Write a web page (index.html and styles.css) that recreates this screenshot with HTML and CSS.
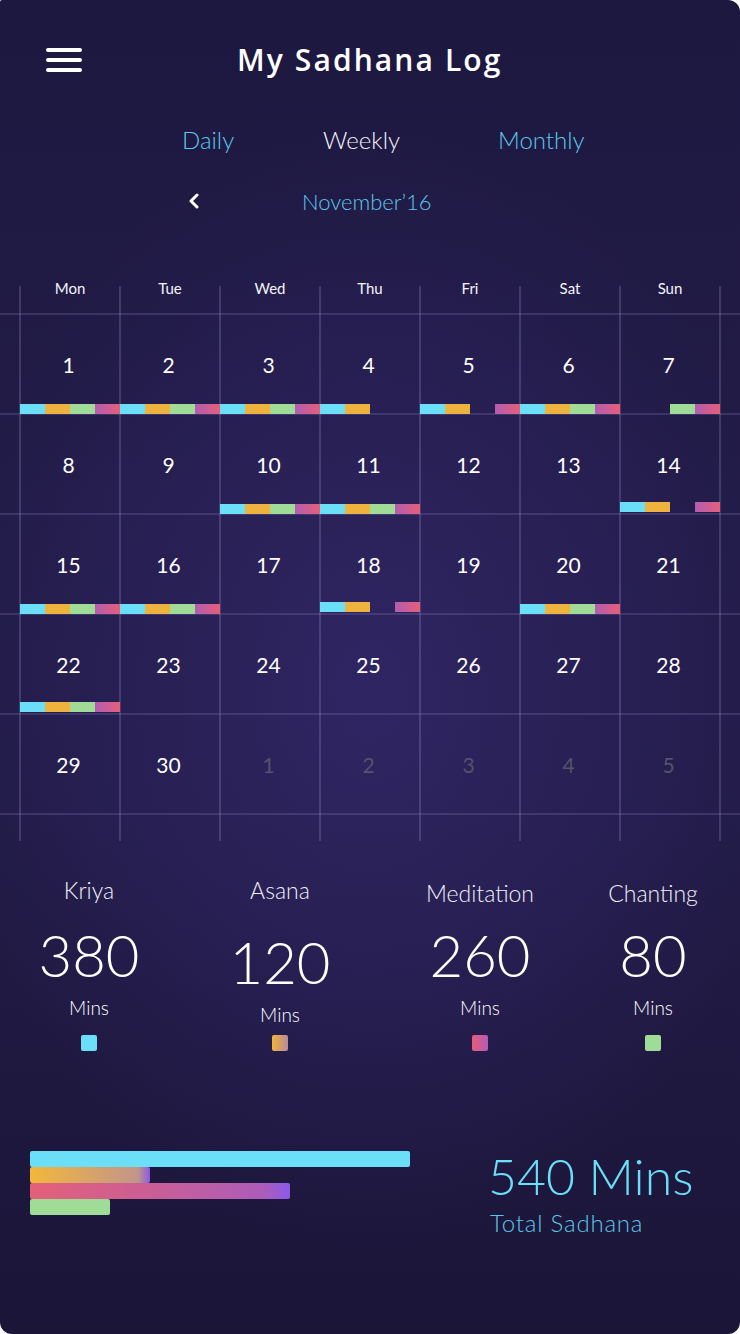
FILE: index.html
```html
<!DOCTYPE html>
<html lang="en">
<head>
<meta charset="utf-8">
<title>My Sadhana Log</title>
<link rel="stylesheet" href="styles.css">
</head>
<body>
<div class="screen">
  <header class="topbar">
    <button class="menu" aria-label="Menu">
      <span></span><span></span><span></span>
    </button>
    <h1 class="title">My Sadhana Log</h1>
  </header>

  <nav class="tabs">
    <span class="tab tab-daily">Daily</span>
    <span class="tab tab-weekly">Weekly</span>
    <span class="tab tab-monthly">Monthly</span>
  </nav>

  <div class="month-nav">
    <svg class="chev" width="12" height="16" viewBox="0 0 12 16"><path d="M9 2 L3 8 L9 14" fill="none" stroke="#fff" stroke-width="3" stroke-linecap="round" stroke-linejoin="round"/></svg>
    <span class="month">November’16</span>
  </div>

  <section class="calendar">
    <div class="row head">
      <div class="grid">
        <div class="dow">Mon</div><div class="dow">Tue</div><div class="dow">Wed</div><div class="dow">Thu</div><div class="dow">Fri</div><div class="dow">Sat</div><div class="dow">Sun</div>
      </div>
    </div>

    <div class="row week">
      <div class="grid">
        <div class="day"><span class="num">1</span><div class="bar"><i class="k"></i><i class="a"></i><i class="c"></i><i class="m"></i></div></div>
        <div class="day"><span class="num">2</span><div class="bar"><i class="k"></i><i class="a"></i><i class="c"></i><i class="m"></i></div></div>
        <div class="day"><span class="num">3</span><div class="bar"><i class="k"></i><i class="a"></i><i class="c"></i><i class="m"></i></div></div>
        <div class="day"><span class="num">4</span><div class="bar"><i class="k"></i><i class="a"></i><i></i><i></i></div></div>
        <div class="day"><span class="num">5</span><div class="bar"><i class="k"></i><i class="a"></i><i></i><i class="m"></i></div></div>
        <div class="day"><span class="num">6</span><div class="bar"><i class="k"></i><i class="a"></i><i class="c"></i><i class="m"></i></div></div>
        <div class="day"><span class="num">7</span><div class="bar"><i></i><i></i><i class="c"></i><i class="m"></i></div></div>
      </div>
    </div>

    <div class="row week">
      <div class="grid">
        <div class="day"><span class="num">8</span></div>
        <div class="day"><span class="num">9</span></div>
        <div class="day"><span class="num">10</span><div class="bar"><i class="k"></i><i class="a"></i><i class="c"></i><i class="m"></i></div></div>
        <div class="day"><span class="num">11</span><div class="bar"><i class="k"></i><i class="a"></i><i class="c"></i><i class="m"></i></div></div>
        <div class="day"><span class="num">12</span></div>
        <div class="day"><span class="num">13</span></div>
        <div class="day"><span class="num">14</span><div class="bar up"><i class="k"></i><i class="a"></i><i></i><i class="m"></i></div></div>
      </div>
    </div>

    <div class="row week">
      <div class="grid">
        <div class="day"><span class="num">15</span><div class="bar"><i class="k"></i><i class="a"></i><i class="c"></i><i class="m"></i></div></div>
        <div class="day"><span class="num">16</span><div class="bar"><i class="k"></i><i class="a"></i><i class="c"></i><i class="m"></i></div></div>
        <div class="day"><span class="num">17</span></div>
        <div class="day"><span class="num">18</span><div class="bar up"><i class="k"></i><i class="a"></i><i></i><i class="m"></i></div></div>
        <div class="day"><span class="num">19</span></div>
        <div class="day"><span class="num">20</span><div class="bar"><i class="k"></i><i class="a"></i><i class="c"></i><i class="m"></i></div></div>
        <div class="day"><span class="num">21</span></div>
      </div>
    </div>

    <div class="row week">
      <div class="grid">
        <div class="day"><span class="num">22</span><div class="bar up"><i class="k"></i><i class="a"></i><i class="c"></i><i class="m"></i></div></div>
        <div class="day"><span class="num">23</span></div>
        <div class="day"><span class="num">24</span></div>
        <div class="day"><span class="num">25</span></div>
        <div class="day"><span class="num">26</span></div>
        <div class="day"><span class="num">27</span></div>
        <div class="day"><span class="num">28</span></div>
      </div>
    </div>

    <div class="row week">
      <div class="grid">
        <div class="day"><span class="num">29</span></div>
        <div class="day"><span class="num">30</span></div>
        <div class="day other"><span class="num">1</span></div>
        <div class="day other"><span class="num">2</span></div>
        <div class="day other"><span class="num">3</span></div>
        <div class="day other"><span class="num">4</span></div>
        <div class="day other"><span class="num">5</span></div>
      </div>
    </div>

    <div class="tail"></div>
  </section>

  <section class="stats">
    <div class="stat">
      <div class="label">Kriya</div>
      <div class="value">380</div>
      <div class="unit">Mins</div>
      <span class="swatch k"></span>
    </div>
    <div class="stat low">
      <div class="label">Asana</div>
      <div class="value">120</div>
      <div class="unit">Mins</div>
      <span class="swatch a"></span>
    </div>
    <div class="stat">
      <div class="label shift">Meditation</div>
      <div class="value">260</div>
      <div class="unit">Mins</div>
      <span class="swatch m"></span>
    </div>
    <div class="stat">
      <div class="label shift">Chanting</div>
      <div class="value">80</div>
      <div class="unit">Mins</div>
      <span class="swatch c"></span>
    </div>
  </section>

  <section class="summary">
    <div class="hbars">
      <div class="hbar k" style="width:380px"></div>
      <div class="hbar a" style="width:120px"></div>
      <div class="hbar m" style="width:260px"></div>
      <div class="hbar c" style="width:80px"></div>
    </div>
    <div class="total">
      <div class="total-value">540 Mins</div>
      <div class="total-label">Total Sadhana</div>
    </div>
  </section>
</div>
</body>
</html>
```
FILE: styles.css
```css
* { box-sizing: border-box; }
html, body { margin: 0; padding: 0; background: #ffffff; }
body { font-family: "Lato", "Open Sans", sans-serif; color: #fff; }

.screen {
  width: 740px;
  height: 1334px;
  border-radius: 2px 12px 12px 12px;
  overflow: hidden;
  background:
    radial-gradient(ellipse 420px 560px at 370px 690px, rgba(52, 40, 108, 0.75), rgba(52, 40, 108, 0) 100%),
    linear-gradient(180deg, #1d1840 0%, #221c48 40%, #221c48 60%, #1b1538 100%);
  display: flex;
  flex-direction: column;
}

/* header */
.topbar {
  height: 120px;
  display: flex;
  align-items: center;
  padding: 0 0 0 46px;
}
.menu {
  width: 36px;
  height: 24px;
  padding: 0;
  border: 0;
  background: none;
  display: flex;
  flex-direction: column;
  justify-content: space-between;
  margin-top: -1px;
}
.menu span {
  display: block;
  height: 4px;
  border-radius: 2px;
  background: #fff;
}
.title {
  margin: 0 0 0 155px;
  font-family: "Open Sans", sans-serif;
  font-weight: 600;
  font-size: 30px;
  letter-spacing: 2.1px;
  line-height: 36px;
  color: #fff;
}

/* tabs */
.tabs {
  height: 44px;
  margin-top: -3px;
  display: grid;
  grid-template-columns: 323px 175px 1fr;
  align-items: center;
  font-weight: 300;
  font-size: 24px;
}
.tab-daily { color: #5bc8e8; margin-left: 182px; }
.tab-weekly { color: #f2f2f8; }
.tab-monthly { color: #5bc8e8; }

/* month nav */
.month-nav {
  height: 44px;
  margin-top: 18px;
  display: flex;
  align-items: center;
  padding-left: 188px;
}
.chev { display: block; }
.month {
  margin-left: 102px;
  font-weight: 300;
  font-size: 22px;
  color: #5bc8e8;
}

/* calendar */
.calendar {
  margin-top: 63px;
  background-image: repeating-linear-gradient(90deg, rgba(150, 140, 200, 0.28) 0, rgba(150, 140, 200, 0.28) 2px, transparent 2px, transparent 100px);
  background-size: 702px 100%;
  background-position: 19px 0;
  background-repeat: no-repeat;
}
.row { border-bottom: 2px solid rgba(150, 140, 200, 0.22); }
.grid {
  margin: 0 20px;
  display: grid;
  grid-template-columns: repeat(7, 100px);
}
.head { height: 29px; }
.dow {
  text-align: center;
  font-size: 15px;
  line-height: 16px;
  margin-top: -6px;
  color: #f4f4fa;
}
.week .grid { height: 98px; }
.day {
  display: flex;
  flex-direction: column;
  align-items: center;
  padding-top: 38px;
}
.num {
  font-size: 21px;
  line-height: 24px;
  color: #fff;
  margin-left: -3px;
}
.day.other .num { color: #54546a; }
.bar {
  margin-top: auto;
  width: 100px;
  height: 10px;
  display: flex;
  margin-bottom: -1px;
}
.bar.up { margin-bottom: 1px; }
.bar i { flex: 0 0 25px; height: 10px; }
.k { background: #6adff7; }
.a { background: #eeb33f; }
.c { background: #9fdc98; }
.m { background: linear-gradient(90deg, #b15cb2, #e65f77); }
.tail { height: 26px; }

/* stats */
.stats {
  margin-top: 35px;
  display: grid;
  grid-template-columns: 178px 204px 196px 150px;
}
.stat {
  display: flex;
  flex-direction: column;
  align-items: center;
}
.label {
  font-weight: 300;
  font-size: 23px;
  line-height: 28px;
  color: #f0f0f8;
}
.label.shift { margin-top: 3px; margin-bottom: -3px; }
.value {
  margin-top: 20px;
  font-weight: 300;
  font-size: 58px;
  line-height: 62px;
  color: #fff;
}
.stat.low .value { margin-top: 27px; }
.unit {
  margin-top: 10px;
  font-weight: 300;
  font-size: 19px;
  line-height: 24px;
  color: #fff;
}
.swatch {
  margin-top: 15px;
  width: 16px;
  height: 16px;
  border-radius: 2px;
}
.stat.low .swatch { margin-top: 8px; }
.swatch.a { background: linear-gradient(90deg, #f0b33a, #b98a98); }
.swatch.m { background: linear-gradient(90deg, #e85d78, #b05cb8); }

/* summary */
.summary {
  margin-top: 100px;
  display: flex;
  padding-left: 30px;
}
.hbars {
  width: 458px;
  display: flex;
  flex-direction: column;
}
.hbar { height: 16px; border-radius: 2px; }
.hbar.a { background: linear-gradient(90deg, #f2b73b 0%, #c2958a 90%, #8c5ae6 100%); }
.hbar.m { background: linear-gradient(90deg, #e4607a 0%, #c85e98 50%, #ac5cba 90%, #8a5ae8 100%); }
.total-value {
  font-weight: 300;
  font-size: 50px;
  line-height: 50px;
  color: #6adff7;
}
.total-label {
  margin-top: 8px;
  margin-left: 2px;
  font-weight: 300;
  font-size: 24px;
  letter-spacing: 0.8px;
  line-height: 28px;
  color: #5bc8e8;
}
```
